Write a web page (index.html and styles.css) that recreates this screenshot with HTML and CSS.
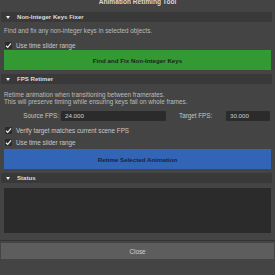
FILE: index.html
```html
<!DOCTYPE html>
<html lang="en">
<head>
<meta charset="UTF-8">
<title>Animation Retiming Tool</title>
<link rel="stylesheet" href="styles.css">
</head>
<body>
<div class="title">Animation Retiming Tool</div>

<!-- Non-integer keys -->
<section class="frame">
<div class="frame-head"><span class="arrow"></span>Non-Integer Keys Fixer</div>
<div class="frame-body">
<p class="desc">Find and fix any non-integer keys in selected objects.</p>
<label class="check first"><span class="box"><svg viewBox="0 0 8 8"><path d="M1.2 4.3 L3.1 6.2 L6.9 1.6" fill="none" stroke="#f0f0f0" stroke-width="1.3"/></svg></span>Use time slider range</label>
<button class="action green">Find and Fix Non-Integer Keys</button>
</div>
</section>

<!-- FPS retimer -->
<section class="frame">
<div class="frame-head"><span class="arrow"></span>FPS Retimer</div>
<div class="frame-body">
<p class="desc two">Retime animation when transitioning between framerates.<br>This will preserve timing while ensuring keys fall on whole frames.</p>
<div class="fps-row">
<span class="lbl src">Source FPS:</span>
<input class="field src" value="24.000">
<span class="lbl tgt">Target FPS:</span>
<input class="field tgt" value="30.000">
</div>
<label class="check verify"><span class="box"><svg viewBox="0 0 8 8"><path d="M1.2 4.3 L3.1 6.2 L6.9 1.6" fill="none" stroke="#f0f0f0" stroke-width="1.3"/></svg></span>Verify target matches current scene FPS</label>
<label class="check slider"><span class="box"><svg viewBox="0 0 8 8"><path d="M1.2 4.3 L3.1 6.2 L6.9 1.6" fill="none" stroke="#f0f0f0" stroke-width="1.3"/></svg></span>Use time slider range</label>
<button class="action blue">Retime Selected Animation</button>
</div>
</section>

<!-- Status -->
<section class="frame status">
<div class="frame-head"><span class="arrow"></span>Status</div>
<div class="frame-body">
<div class="log"></div>
</div>
</section>

<div class="footer">
<button class="close">Close</button>
</div>
</body>
</html>
```

FILE: styles.css
```css
*{margin:0;padding:0;box-sizing:border-box;}
html,body{height:100%;background:#444;color:#c4c4c4;font-family:'Liberation Sans',Arial,sans-serif;font-size:6.3px;overflow:hidden;}

.title{height:12px;line-height:4px;text-align:center;font-weight:bold;color:#d8d8d8;font-size:6.6px;}

/* collapsible frames */
.frame-head{height:10px;line-height:10px;margin:0 3px 0 1px;background:#393939;color:#dcdcdc;font-weight:bold;font-size:6.1px;display:flex;align-items:center;}
.arrow{width:0;height:0;margin:0 7px 0 5px;border-left:2.5px solid transparent;border-right:2.5px solid transparent;border-top:3px solid #eee;}
.frame-body{padding:5px 4px 0;}
.frame + .frame{margin-top:4px;}

.desc{line-height:8px;color:#bcbcbc;}
.desc.two{line-height:7px;padding-top:1.5px;}

.check{display:flex;align-items:center;height:9px;line-height:9px;color:#c8c8c8;white-space:nowrap;}
.check.first{margin-top:5.5px;}
.check.verify{margin-top:4.5px;}
.check.slider{margin-top:3.5px;}
.box{width:7px;height:7px;margin:0 4px 0 1px;background:#2b2b2b;border-radius:1px;display:flex;}
.box svg{width:7px;height:7px;}

.action{display:block;width:100%;height:20px;border:none;font-family:inherit;font-size:6.2px;font-weight:bold;}
.green{margin-top:.5px;background:#339933;color:#1f1f1f;}
.blue{margin-top:2px;background:#3265b6;color:#16243f;}

.fps-row{display:flex;align-items:center;margin-top:6px;height:10.5px;white-space:nowrap;}
.lbl{color:#c4c4c4;flex:none;}
.lbl.src{width:55px;text-align:right;}
.lbl.tgt{width:31px;margin-left:13px;}
.field{flex:none;height:10.5px;background:#2b2b2b;border:none;color:#cfcfcf;font-family:inherit;font-size:6.2px;padding:0 4px;outline:none;}
.field.src{width:105px;margin-left:2px;}
.field.tgt{width:44px;margin-left:16px;}

.log{height:45px;background:#2b2b2b;}

.footer{margin-top:7px;border-top:1px solid #333;padding:2px 1px 0;}
.close{display:block;width:100%;height:16px;border:none;background:#5d5d5d;color:#d0d0d0;font-family:inherit;font-size:6.3px;}
```
